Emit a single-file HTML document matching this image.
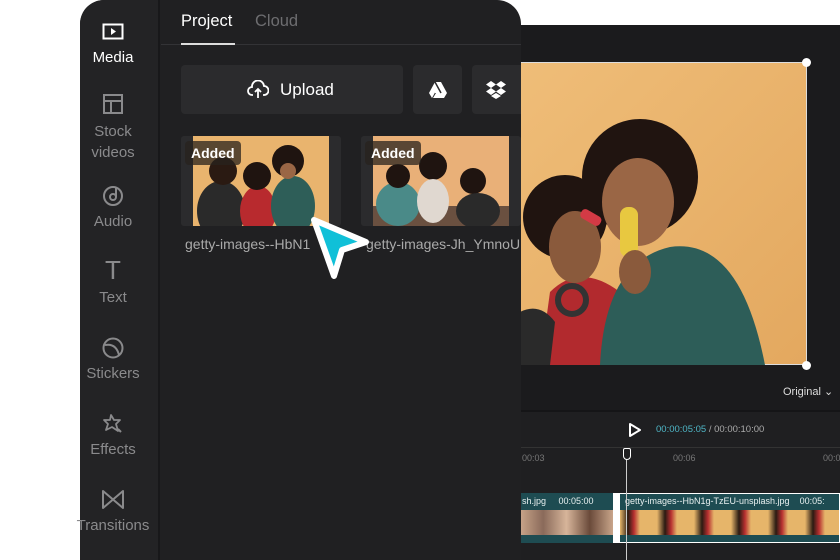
<!DOCTYPE html>
<html><head><style>
*{margin:0;padding:0;box-sizing:border-box}
body{width:840px;height:560px;overflow:hidden;background:#fff;position:relative;font-family:"Liberation Sans",sans-serif}
.abs{position:absolute}
.side{color:#8a8a8c;font-size:14px;text-align:center;width:80px;left:73px}
</style></head><body>
<div class="abs" style="left:500px;top:25px;width:340px;height:535px;background:#1b1b1d"></div>
<div class="abs" style="left:520px;top:410px;width:320px;height:150px;background:#1f1f21;border-top:2px solid #151517"></div>
<div class="abs" style="left:520px;top:62px;width:287px;height:303px;background:linear-gradient(135deg,#efbd78,#e3a85f);border:1px solid #ddd"></div>
<svg class="abs" style="left:520px;top:62px" width="287" height="303">
<path d="M20 303 L30 230 Q60 200 100 230 L110 303Z" fill="#b22a2e"/>
<path d="M0 303 L0 250 Q20 240 35 260 L30 303Z" fill="#2a2a2a"/>
<circle cx="45" cy="155" r="42" fill="#201410"/>
<ellipse cx="55" cy="185" rx="26" ry="36" fill="#8a5a3c"/>
<circle cx="52" cy="238" r="14" fill="none" stroke="#333" stroke-width="6"/>
<path d="M80 303 Q85 200 150 185 Q220 175 245 303Z" fill="#2d5d58"/>
<circle cx="120" cy="115" r="58" fill="#201410"/>
<ellipse cx="118" cy="140" rx="36" ry="44" fill="#9a6645"/>
<rect x="100" y="145" width="18" height="50" fill="#e8c840" rx="8"/>
<rect x="60" y="150" width="22" height="10" fill="#d33a45" rx="4" transform="rotate(30 70 155)"/>
<ellipse cx="115" cy="210" rx="16" ry="22" fill="#8a5a3c"/>
</svg>
<div class="abs" style="left:802px;top:58px;width:9px;height:9px;border-radius:50%;background:#fff"></div>
<div class="abs" style="left:802px;top:361px;width:9px;height:9px;border-radius:50%;background:#fff"></div>
<div class="abs" style="left:783px;top:385px;color:#ddd;font-size:11px">Original ⌄</div>
<svg class="abs" style="left:628px;top:422px" width="14" height="16"><path d="M2 2 L12 8 L2 14Z" fill="none" stroke="#fff" stroke-width="2" stroke-linejoin="round"/></svg>
<div class="abs" style="left:656px;top:424px;font-size:9.5px;color:#4fb7c7">00:00:05:05 <span style="color:#aaa">/ 00:00:10:00</span></div>
<div class="abs" style="left:520px;top:447px;width:320px;height:1px;background:#333"></div>
<div class="abs" style="left:522px;top:453px;font-size:9px;color:#777">00:03</div>
<div class="abs" style="left:673px;top:453px;font-size:9px;color:#777">00:06</div>
<div class="abs" style="left:823px;top:453px;font-size:9px;color:#777">00:0</div>
<div class="abs" style="left:520px;top:493px;width:320px;height:50px;background:#1e4c52"></div>
<div class="abs" style="left:520px;top:510px;width:93px;height:25px;background:linear-gradient(90deg,#c9a58a,#8a6a5a,#d7b59a,#6a4a3a,#c9a58a)"></div>
<div class="abs" style="left:620px;top:510px;width:220px;height:25px;background:repeating-linear-gradient(90deg,#e6b56a 0,#2a1a12 8px,#b73030 14px,#e6b56a 20px,#e6b56a 37px)"></div>
<div class="abs" style="left:613px;top:493px;width:7px;height:50px;background:#fff"></div>
<div class="abs" style="left:620px;top:493px;width:220px;height:50px;border:1px solid #fff;border-left:none"></div>
<div class="abs" style="left:522px;top:496px;font-size:9px;color:#e8f0f0">sh.jpg &nbsp;&nbsp;&nbsp;&nbsp;00:05:00</div>
<div class="abs" style="left:625px;top:496px;font-size:9px;color:#e8f0f0;white-space:nowrap">getty-images--HbN1g-TzEU-unsplash.jpg &nbsp;&nbsp;&nbsp;00:05:</div>
<div class="abs" style="left:626px;top:455px;width:1px;height:105px;background:#ccc"></div>
<div class="abs" style="left:623px;top:448px;width:8px;height:12px;border:1.5px solid #fff;border-radius:2px 2px 4px 4px;background:#1f1f21"></div>

<div class="abs" style="left:80px;top:0;width:441px;height:560px;background:#202022;border-radius:24px 24px 0 0;overflow:hidden">
 <div class="abs" style="left:0;top:0;width:80px;height:560px;background:#232325;border-right:2px solid #18181a"></div>
</div>
<svg class="abs" style="left:102px;top:23px" width="22" height="18"><rect x="1.5" y="1.5" width="19" height="14" fill="none" stroke="#fff" stroke-width="2"/><path d="M9 5 L14 8.5 L9 12Z" fill="#fff"/></svg>
<div class="abs side" style="top:49px;color:#fff;font-size:15px">Media</div>
<svg class="abs" style="left:103px;top:94px" width="20" height="20"><rect x="1" y="1" width="18" height="18" fill="none" stroke="#8a8a8c" stroke-width="2"/><path d="M1 7H19M8 7V19" stroke="#8a8a8c" stroke-width="2"/></svg>
<div class="abs side" style="top:121px;line-height:21px;font-size:15px">Stock<br>videos</div>
<svg class="abs" style="left:102px;top:184px" width="22" height="22"><circle cx="11" cy="12" r="9" fill="none" stroke="#8a8a8c" stroke-width="2"/><circle cx="11" cy="13" r="3" fill="none" stroke="#8a8a8c" stroke-width="2"/><path d="M14 13V3" stroke="#8a8a8c" stroke-width="2"/></svg>
<div class="abs side" style="top:213px;font-size:15px">Audio</div>
<div class="abs side" style="top:255px;font-size:26px;font-weight:300">T</div>
<div class="abs side" style="top:289px;font-size:15px">Text</div>
<svg class="abs" style="left:102px;top:337px" width="22" height="22"><circle cx="11" cy="11" r="9.5" fill="none" stroke="#8a8a8c" stroke-width="2"/><path d="M3 8 Q14 6 17 18" fill="none" stroke="#8a8a8c" stroke-width="2"/></svg>
<div class="abs side" style="top:365px;font-size:15px">Stickers</div>
<svg class="abs" style="left:102px;top:413px" width="22" height="22"><path d="M9 2 L12 7 L18 7 L14 11 L16 18 L10 14 L4 17 L6 11 L2 7 L8 7Z" fill="none" stroke="#8a8a8c" stroke-width="1.8" stroke-linejoin="round"/><path d="M16 16 L19 19" stroke="#8a8a8c" stroke-width="2"/></svg>
<div class="abs side" style="top:441px;font-size:15px">Effects</div>
<svg class="abs" style="left:102px;top:490px" width="22" height="20"><path d="M1 1 L21 18 L21 1 L1 18Z" fill="none" stroke="#8a8a8c" stroke-width="2" stroke-linejoin="round"/></svg>
<div class="abs side" style="top:517px;font-size:15px">Transitions</div>

<div class="abs" style="left:181px;top:12px;color:#fff;font-size:16.5px">Project</div>
<div class="abs" style="left:255px;top:12px;color:#6d6d70;font-size:16.5px">Cloud</div>
<div class="abs" style="left:161px;top:44px;width:360px;height:1px;background:#333336"></div>
<div class="abs" style="left:181px;top:43px;width:54px;height:2px;background:#ddd"></div>
<div class="abs" style="left:181px;top:65px;width:222px;height:49px;background:#2b2b2d;border-radius:4px"></div>
<svg class="abs" style="left:247px;top:80px" width="22" height="20"><path d="M6 15 H5 A4 4 0 0 1 5 7 A6 6 0 0 1 17 6 A4.5 4.5 0 0 1 17 15 H16" fill="none" stroke="#fff" stroke-width="1.8"/><path d="M11 18 V10 M8 12 L11 9 L14 12" fill="none" stroke="#fff" stroke-width="1.8"/></svg>
<div class="abs" style="left:280px;top:80px;color:#fff;font-size:17px">Upload</div>
<div class="abs" style="left:413px;top:65px;width:49px;height:49px;background:#2b2b2d;border-radius:4px"></div>
<svg class="abs" style="left:428px;top:81px" width="20" height="18"><path d="M7 1 H13 L19 12 H7Z" fill="#fff"/><path d="M7 1 L1 12 L4 17 L10 6Z" fill="#fff"/><path d="M5 17 H16 L19 12 H8Z" fill="#fff"/><path d="M7 1 L13 12" stroke="#2b2b2d" stroke-width="1.5"/></svg>
<div class="abs" style="left:472px;top:65px;width:49px;height:49px;background:#2b2b2d;border-radius:4px 0 0 4px"></div>
<svg class="abs" style="left:485px;top:80px" width="22" height="20"><path d="M6 1 L11 4.5 L6 8 L1 4.5Z M16 1 L21 4.5 L16 8 L11 4.5Z M6 8 L11 11.5 L6 15 L1 11.5Z M16 8 L21 11.5 L16 15 L11 11.5Z M6 16 L11 19 L16 16 L11 13Z" fill="#fff"/></svg>
<div class="abs" style="left:181px;top:136px;width:160px;height:90px;background:#2b2b2d;border-radius:3px"></div>
<svg class="abs" style="left:193px;top:136px" width="136" height="90"><rect width="136" height="90" fill="#e9b46e"/><ellipse cx="28" cy="75" rx="24" ry="30" fill="#2a2a2a"/><circle cx="30" cy="35" r="14" fill="#2a1a12"/><ellipse cx="65" cy="75" rx="18" ry="25" fill="#b82a2e"/><circle cx="64" cy="40" r="14" fill="#1f1410"/><ellipse cx="100" cy="70" rx="22" ry="30" fill="#2e5e58"/><circle cx="95" cy="25" r="16" fill="#1f1410"/><circle cx="95" cy="35" r="8" fill="#9a6645"/></svg>
<div class="abs" style="left:185px;top:141px;width:56px;height:24px;background:rgba(40,35,30,.75);border-radius:4px;color:#fff;font-size:14px;font-weight:bold;padding:4px 6px">Added</div>
<div class="abs" style="left:361px;top:136px;width:160px;height:90px;background:#2b2b2d;border-radius:3px"></div>
<svg class="abs" style="left:373px;top:136px" width="136" height="90"><rect width="136" height="90" fill="#e9b078"/><rect y="70" width="136" height="20" fill="#6a5040"/><ellipse cx="25" cy="68" rx="22" ry="22" fill="#4a8a88"/><circle cx="25" cy="40" r="12" fill="#1f1410"/><circle cx="60" cy="30" r="14" fill="#1f1410"/><ellipse cx="60" cy="65" rx="16" ry="22" fill="#e0d8d0"/><circle cx="100" cy="45" r="13" fill="#1f1410"/><ellipse cx="105" cy="75" rx="22" ry="18" fill="#2a2a2a"/></svg>
<div class="abs" style="left:365px;top:141px;width:56px;height:24px;background:rgba(40,35,30,.75);border-radius:4px;color:#fff;font-size:14px;font-weight:bold;padding:4px 6px">Added</div>
<div class="abs" style="left:185px;top:236px;color:#aaa;font-size:14px;white-space:nowrap">getty-images--HbN1</div>
<div class="abs" style="left:366px;top:236px;color:#aaa;font-size:14px;white-space:nowrap;width:155px;overflow:hidden">getty-images-Jh_YmnoU</div>
<svg class="abs" style="left:304px;top:212px" width="74" height="74"><path d="M10 8 L62 30 L38 38 L30 64Z" fill="#10c0d8" stroke="#fff" stroke-width="6" stroke-linejoin="round"/></svg>
</body></html>
